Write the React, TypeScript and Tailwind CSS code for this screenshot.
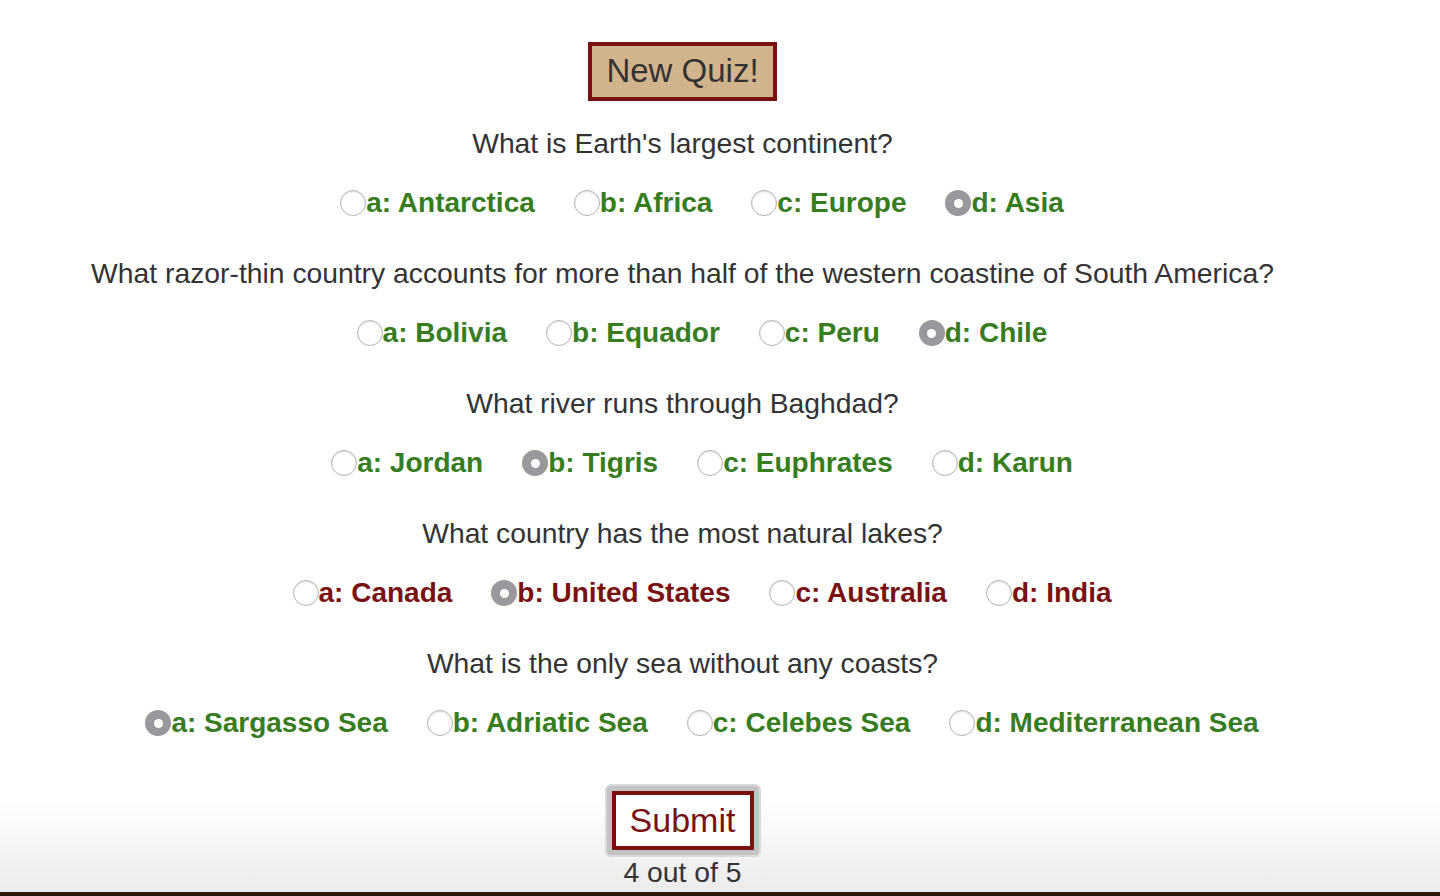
import React from 'react'

type Question = {
  text: string
  answers: string[]
  picked: number
  color: 'green' | 'red'
}

const questions: Question[] = [
  {
    text: "What is Earth's largest continent?",
    answers: ['a: Antarctica', 'b: Africa', 'c: Europe', 'd: Asia'],
    picked: 3,
    color: 'green',
  },
  {
    text: 'What razor-thin country accounts for more than half of the western coastine of South America?',
    answers: ['a: Bolivia', 'b: Equador', 'c: Peru', 'd: Chile'],
    picked: 3,
    color: 'green',
  },
  {
    text: 'What river runs through Baghdad?',
    answers: ['a: Jordan', 'b: Tigris', 'c: Euphrates', 'd: Karun'],
    picked: 1,
    color: 'green',
  },
  {
    text: 'What country has the most natural lakes?',
    answers: ['a: Canada', 'b: United States', 'c: Australia', 'd: India'],
    picked: 1,
    color: 'red',
  },
  {
    text: 'What is the only sea without any coasts?',
    answers: ['a: Sargasso Sea', 'b: Adriatic Sea', 'c: Celebes Sea', 'd: Mediterranean Sea'],
    picked: 0,
    color: 'green',
  },
]

function Radio({ checked }: { checked: boolean }) {
  if (checked) {
    return (
      <span className="flex h-[26px] w-[26px] shrink-0 items-center justify-center rounded-full bg-[#98989d]">
        <span className="h-[9px] w-[9px] rounded-full bg-white" />
      </span>
    )
  }
  return (
    <span className="h-[26px] w-[26px] shrink-0 rounded-full border border-[#b4b4b4] bg-white shadow-[inset_0_1px_2px_rgba(0,0,0,0.12)]" />
  )
}

export default function App() {
  return (
    <div className="w-[1440px] font-['Liberation_Sans',Arial,sans-serif] text-[#333]">
      <div className="h-[892px] bg-[linear-gradient(180deg,#ffffff_800px,#ebebeb_100%)]">
        <div className="flex w-[1365px] flex-col items-center pt-[42px] text-center">
          <button className="h-[59px] w-[189px] border-4 border-[#7a1111] bg-[#d2b48c] pb-[3px] text-[33px] leading-none text-[#333]">
            New Quiz!
          </button>

          <div className="mt-[27px] flex flex-col gap-[40px]">
            {questions.map((q, qi) => (
              <div key={qi} className="flex flex-col items-center">
                <p className="text-[28.3px] leading-[30px]">{q.text}</p>
                <div className="mt-[30px] flex items-center justify-center">
                  {q.answers.map((a, ai) => (
                    <label key={ai} className="ml-[39px] flex items-center">
                      <Radio checked={ai === q.picked} />
                      <span
                        className={
                          q.color === 'green'
                            ? 'text-[28px] font-bold leading-[30px] text-[#377d1f]'
                            : 'text-[28px] font-bold leading-[30px] text-[#7a1111]'
                        }
                      >
                        {a}
                      </span>
                    </label>
                  ))}
                </div>
              </div>
            ))}
          </div>

          <div className="mt-[46px] rounded-[6px] border-2 border-[#dadada] bg-[#c3c3c3] p-[5px]">
            <button className="h-[59px] w-[142px] border-4 border-[#7a1111] bg-white pb-[2px] text-[34px] leading-none text-[#7a1111]">
              Submit
            </button>
          </div>
          <p className="text-[28.3px] leading-[30px]">4 out of 5</p>
        </div>
      </div>
      <div className="h-[4px] bg-[#2a1a0d]" />
    </div>
  )
}
